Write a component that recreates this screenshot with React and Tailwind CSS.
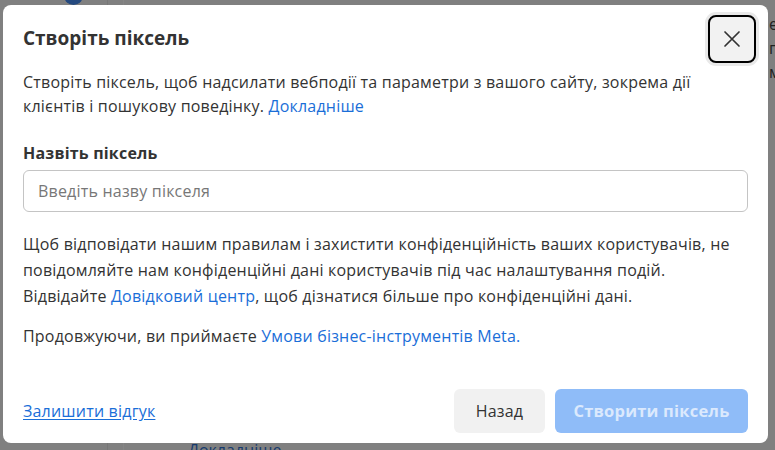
export default function App() {
  return (
    <div
      className="relative w-[775px] h-[450px] overflow-hidden bg-[#808080] pt-[5px] pl-[3px]"
      style={{ fontFamily: "'Open Sans', 'Liberation Sans', sans-serif" }}
    >
      {/* page behind the overlay */}
      <div className="absolute left-[64px] top-[-14px] w-[19px] h-[19px] rounded-full bg-[#24497f]" />
      <div className="absolute left-[107px] top-0 w-px h-[450px] bg-[#777]" />
      <div className="absolute left-[123px] top-0 w-px h-[450px] bg-[#858585]" />
      <div className="absolute left-[769px] top-[12px] text-[16px] leading-[24px] text-[#222] flex flex-col">
        <span>е</span>
        <span>п</span>
        <span>м</span>
      </div>
      <div className="absolute left-[188px] top-[438px] text-[16px] leading-[24px] text-[#163a6e]">
        Докладніше
      </div>

      {/* dialog */}
      <div className="relative w-[765px] h-[438px] bg-white rounded-[8px] flex flex-col text-[#333] tracking-[0.2px]">
        <div className="flex justify-between items-start h-[60px]">
          <h2 className="pl-5 pt-[21px] text-[19px] leading-[24px] font-bold tracking-normal">
            Створіть піксель
          </h2>
          <button className="mt-[10px] mr-[12px] w-[48px] h-[48px] rounded-[8px] border-2 border-black bg-[#f2f2f2] ring-[3px] ring-[#e9e9e9] flex items-center justify-center">
            <svg width="18" height="18" viewBox="0 0 18 18" fill="none" stroke="#333" strokeWidth="1.7" strokeLinecap="round">
              <path d="M2 2 L16 16 M16 2 L2 16" />
            </svg>
          </button>
        </div>

        <div className="px-5 mt-[5px] text-[16px] leading-[24px]">
          <p>
            Створіть піксель, щоб надсилати вебподії та параметри з вашого сайту, зокрема дії
            клієнтів і пошукову поведінку. <a className="text-[#1a6ed8]">Докладніше</a>
          </p>

          <div className="mt-[23px] font-bold">Назвіть піксель</div>
          <div className="mt-[5px] h-[42px] rounded-[6px] border border-[#c4c4c4] flex items-center px-[14px] text-[#777]">
            Введіть назву пікселя
          </div>

          <p className="mt-[19px] leading-[26px]">
            Щоб відповідати нашим правилам і захистити конфіденційність ваших користувачів, не
            повідомляйте нам конфіденційні дані користувачів під час налаштування подій.
            Відвідайте <a className="text-[#1a6ed8]">Довідковий центр</a>, щоб дізнатися більше про
            конфіденційні дані.
          </p>

          <p className="mt-[15px]">
            Продовжуючи, ви приймаєте{" "}
            <a className="text-[#1a6ed8]">Умови бізнес-інструментів Meta.</a>
          </p>
        </div>

        <div className="mt-auto mb-[10px] px-5 flex items-center justify-between">
          <a className="text-[16px] text-[#1a6ed8] underline underline-offset-2">Залишити відгук</a>
          <div className="flex gap-[10px]">
            <button className="h-[44px] w-[91px] rounded-[6px] bg-[#f1f1f1] text-[16px]">
              Назад
            </button>
            <button className="h-[44px] w-[193px] rounded-[6px] bg-[#8fbcf8] text-[16.5px] font-bold text-[#dbe9fd]">
              Створити піксель
            </button>
          </div>
        </div>
      </div>
    </div>
  );
}
